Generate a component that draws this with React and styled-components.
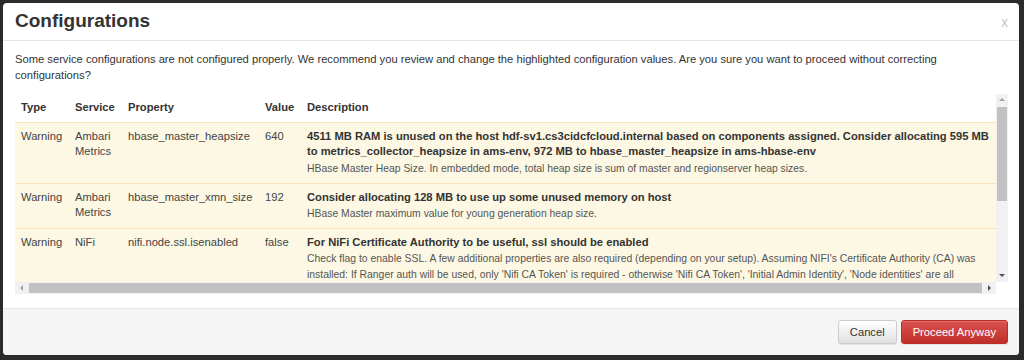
import React from "react";
import styled, { createGlobalStyle } from "styled-components";

const Global = createGlobalStyle`
  html, body { margin: 0; padding: 0; background: #2b2b2b; }
  body { font-family: "Liberation Sans", Arial, sans-serif; color: #333; font-size: 11.2px; }
`;

const Backdrop = styled.div`
  width: 1024px;
  height: 360px;
  padding: 3px 5px 5px 3px;
  box-sizing: border-box;
  background: #2b2b2b;
`;

const Modal = styled.div`
  width: 1016px;
  height: 352px;
  background: #fff;
  border-radius: 4px;
  display: flex;
  flex-direction: column;
  overflow: hidden;
`;

const Header = styled.div`
  height: 38px;
  box-sizing: border-box;
  padding: 0 11px 0 12px;
  border-bottom: 1px solid #e5e5e5;
  display: flex;
  align-items: center;
  justify-content: space-between;
`;

const Title = styled.h4`
  margin: 0;
  font-size: 19px;
  font-weight: bold;
  color: #333;
  line-height: 1.1;
`;

const Close = styled.span`
  color: #c4c4c4;
  font-size: 14px;
  line-height: 1;
  padding-top: 1px;
`;

const Body = styled.div`
  padding: 11px 11px 0 12px;
  flex: 1;
`;

const Intro = styled.p`
  margin: 0 0 11px;
  line-height: 15.6px;
`;

const ScrollBox = styled.div`
  width: 993px;
  height: 200px;
  display: grid;
  grid-template-columns: 981px 12px;
  grid-template-rows: 188px 12px;
`;

const Viewport = styled.div`
  overflow: hidden;
`;

const VBar = styled.div`
  background: #f1f1f1;
  display: flex;
  flex-direction: column;
`;

const HBar = styled.div`
  background: #f1f1f1;
  display: flex;
  flex-direction: row;
`;

const Corner = styled.div`
  background: #fff;
`;

const ArrowBtn = styled.div`
  flex: 0 0 ${(p) => p.$size}px;
  height: ${(p) => (p.$horizontal ? "12px" : `${p.$size}px`)};
  display: flex;
  align-items: center;
  justify-content: center;
`;

const Tri = styled.span`
  width: 0;
  height: 0;
  border: 3px solid transparent;
  ${(p) =>
    p.$dir === "up"
      ? `border-bottom-color: ${p.$c}; border-top-width: 0; margin-top: -1px;`
      : p.$dir === "down"
      ? `border-top-color: ${p.$c}; border-bottom-width: 0;`
      : p.$dir === "left"
      ? `border-right-color: ${p.$c}; border-left-width: 0;`
      : `border-left-color: ${p.$c}; border-right-width: 0;`}
`;

const Thumb = styled.div`
  background: #c1c1c1;
  margin: 1px;
  ${(p) => (p.$horizontal ? "flex: 1;" : `height: ${p.$len}px; flex: 0 0 ${p.$len}px;`)}
`;

const Track = styled.div`
  flex: 1;
`;

const Table = styled.table`
  width: 985px;
  table-layout: fixed;
  border-collapse: collapse;
  border-spacing: 0;
  line-height: 15.6px;
`;

const Th = styled.th`
  text-align: left;
  font-weight: bold;
  padding: 6px;
  vertical-align: bottom;
  width: ${(p) => (p.$w ? `${p.$w}px` : "auto")};
  box-sizing: border-box;
  color: #333;
`;

const Row = styled.tr`
  background: #fcf8e3;
  border-top: 1px solid #f5e4bc;
`;

const Td = styled.td`
  padding: 6px;
  vertical-align: top;
  color: #444;
`;

const Strong = styled.div`
  font-weight: bold;
  color: #333;
`;

const Small = styled.div`
  font-size: 10.4px;
  color: #555;
  padding-top: 1px;
`;

const Footer = styled.div`
  height: 47px;
  box-sizing: border-box;
  border-top: 1px solid #e5e5e5;
  background: #f5f5f5;
  padding: 0 11px;
  display: flex;
  align-items: center;
  justify-content: flex-end;
  gap: 4px;
`;

const Button = styled.button`
  height: 24px;
  padding: 0 11px;
  font-family: "Liberation Sans", Arial, sans-serif;
  font-size: 11.2px;
  border-radius: 3px;
  cursor: pointer;
  border: 1px solid ${(p) => (p.$danger ? "#b92c28" : "#ccc")};
  color: ${(p) => (p.$danger ? "#fff" : "#333")};
  background: ${(p) =>
    p.$danger
      ? "linear-gradient(to bottom, #d9534f 0%, #c12e2a 100%)"
      : "linear-gradient(to bottom, #fff 0%, #e0e0e0 100%)"};
  box-shadow: inset 0 1px 0 rgba(255,255,255,.15), 0 1px 1px rgba(0,0,0,.075);
`;

const rows = [
  {
    type: "Warning",
    service: "Ambari Metrics",
    property: "hbase_master_heapsize",
    value: "640",
    title:
      "4511 MB RAM is unused on the host hdf-sv1.cs3cidcfcloud.internal based on components assigned. Consider allocating 595 MB to metrics_collector_heapsize in ams-env, 972 MB to hbase_master_heapsize in ams-hbase-env",
    desc: "HBase Master Heap Size. In embedded mode, total heap size is sum of master and regionserver heap sizes.",
  },
  {
    type: "Warning",
    service: "Ambari Metrics",
    property: "hbase_master_xmn_size",
    value: "192",
    title: "Consider allocating 128 MB to use up some unused memory on host",
    desc: "HBase Master maximum value for young generation heap size.",
  },
  {
    type: "Warning",
    service: "NiFi",
    property: "nifi.node.ssl.isenabled",
    value: "false",
    title: "For NiFi Certificate Authority to be useful, ssl should be enabled",
    desc:
      "Check flag to enable SSL. A few additional properties are also required (depending on your setup). Assuming NIFI's Certificate Authority (CA) was installed: If Ranger auth will be used, only 'Nifi CA Token' is required - otherwise 'Nifi CA Token', 'Initial Admin Identity', 'Node identities' are all required. Assuming NIFI's Certificate Authority (CA) was not installed: 'Keystore filename', 'Keystore password', 'Keystore type', 'Truststore filename', 'Truststore password', 'Truststore type' are required.",
  },
  {
    type: "Warning",
    service: "NiFi",
    property: "nifi.security.encrypt.configuration.password",
    value: "",
    title: "The value must be at least 12 characters long",
    desc: "The password used to encrypt any sensitive property values that are configured in NiFi.",
  },
];

export default function App() {
  return (
    <>
      <Global />
      <Backdrop>
        <Modal>
          <Header>
            <Title>Configurations</Title>
            <Close>x</Close>
          </Header>
          <Body>
            <Intro>
              Some service configurations are not configured properly. We recommend you review and change the
              highlighted configuration values. Are you sure you want to proceed without correcting configurations?
            </Intro>
            <ScrollBox>
              <Viewport>
                <Table>
                  <thead>
                    <tr>
                      <Th $w={54}>Type</Th>
                      <Th $w={53}>Service</Th>
                      <Th $w={137}>Property</Th>
                      <Th $w={42}>Value</Th>
                      <Th>Description</Th>
                    </tr>
                  </thead>
                  <tbody>
                    {rows.map((r, i) => (
                      <Row key={i}>
                        <Td>{r.type}</Td>
                        <Td>{r.service}</Td>
                        <Td>{r.property}</Td>
                        <Td>{r.value}</Td>
                        <Td>
                          <Strong>{r.title}</Strong>
                          <Small>{r.desc}</Small>
                        </Td>
                      </Row>
                    ))}
                  </tbody>
                </Table>
              </Viewport>
              <VBar>
                <ArrowBtn $size={12}>
                  <Tri $dir="up" $c="#a3a3a3" />
                </ArrowBtn>
                <Thumb $len={94} />
                <Track />
                <ArrowBtn $size={13}>
                  <Tri $dir="down" $c="#505050" />
                </ArrowBtn>
              </VBar>
              <HBar>
                <ArrowBtn $size={13} $horizontal>
                  <Tri $dir="left" $c="#a3a3a3" />
                </ArrowBtn>
                <Thumb $horizontal />
                <ArrowBtn $size={13} $horizontal>
                  <Tri $dir="right" $c="#505050" />
                </ArrowBtn>
              </HBar>
              <Corner />
            </ScrollBox>
          </Body>
          <Footer>
            <Button>Cancel</Button>
            <Button $danger>Proceed Anyway</Button>
          </Footer>
        </Modal>
      </Backdrop>
    </>
  );
}
